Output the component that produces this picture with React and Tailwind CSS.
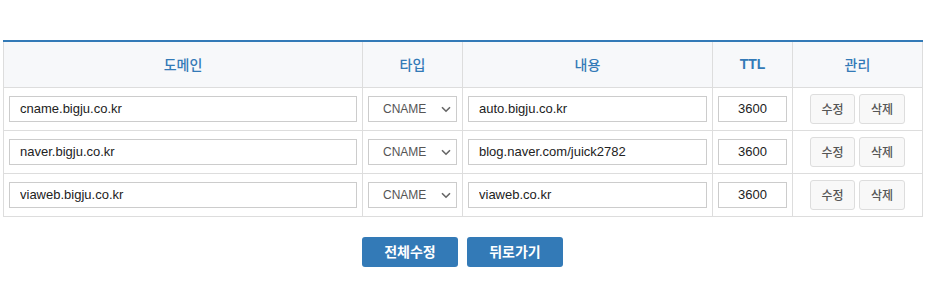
import React from "react";

const rows = [
  { domain: "cname.bigju.co.kr", content: "auto.bigju.co.kr", ttl: "3600" },
  { domain: "naver.bigju.co.kr", content: "blog.naver.com/juick2782", ttl: "3600" },
  { domain: "viaweb.bigju.co.kr", content: "viaweb.co.kr", ttl: "3600" },
];

const kr = { fontFamily: '"Noto Sans CJK KR", "Liberation Sans", sans-serif' };
const latin = { fontFamily: '"Liberation Sans", Arial, "Noto Sans CJK KR", sans-serif' };

export default function App() {
  return (
    <div className="w-[933px] h-[284px] bg-white pt-[40px]" style={latin}>
      <table className="ml-[3px] w-[919px] border-collapse table-fixed border-t-2 border-t-[#337ab7]">
        <colgroup>
          <col className="w-[359px]" />
          <col className="w-[100px]" />
          <col className="w-[250px]" />
          <col className="w-[80px]" />
          <col className="w-[130px]" />
        </colgroup>
        <thead>
          <tr className="bg-[#f7f8fa]">
            {["도메인", "타입", "내용"].map((h) => (
              <th key={h} className="h-[46px] border border-[#dddddd] border-t-0 text-[14px] font-medium text-[#337ab7] text-center align-middle p-0" style={kr}>
                {h}
              </th>
            ))}
            <th className="h-[46px] border border-[#dddddd] border-t-0 text-[14px] font-bold text-[#337ab7] text-center align-middle p-0" style={latin}>
              TTL
            </th>
            <th className="h-[46px] border border-[#dddddd] border-t-0 text-[14px] font-medium text-[#337ab7] text-center align-middle p-0" style={kr}>
              관리
            </th>
          </tr>
        </thead>
        <tbody>
          {rows.map((r, i) => (
            <tr key={i}>
              <td className="border border-[#dddddd] px-[5px] py-[6px] align-middle">
                <input
                  readOnly
                  value={r.domain}
                  className="block w-full h-[26px] border border-[#cccccc] px-[10px] text-[13px] text-[#222222] outline-none"
                  style={latin}
                />
              </td>
              <td className="border border-[#dddddd] px-[5px] py-[6px] align-middle">
                <div className="relative h-[26px] w-full border border-[#cccccc] flex items-center">
                  <span className="pl-[14px] text-[12px] text-[#555555]" style={latin}>CNAME</span>
                  <svg className="absolute right-[5px] top-[9px]" width="10" height="7" viewBox="0 0 10 7">
                    <path d="M1 1.2 L5 5.2 L9 1.2" fill="none" stroke="#666666" strokeWidth="1.6" />
                  </svg>
                </div>
              </td>
              <td className="border border-[#dddddd] px-[5px] py-[6px] align-middle">
                <input
                  readOnly
                  value={r.content}
                  className="block w-full h-[26px] border border-[#cccccc] px-[10px] text-[13px] text-[#222222] outline-none"
                  style={latin}
                />
              </td>
              <td className="border border-[#dddddd] px-[5px] py-[6px] align-middle">
                <input
                  readOnly
                  value={r.ttl}
                  className="block w-full h-[26px] border border-[#cccccc] text-center text-[13px] text-[#222222] outline-none"
                  style={latin}
                />
              </td>
              <td className="border border-[#dddddd] px-0 py-[6px] align-middle">
                <div className="flex justify-center gap-[4px]">
                  <button className="w-[45px] h-[30px] rounded-[3px] border border-[#dddddd] bg-[#f8f8f8] text-[12px] font-medium text-[#555555]" style={kr}>
                    수정
                  </button>
                  <button className="w-[46px] h-[30px] rounded-[3px] border border-[#dddddd] bg-[#f8f8f8] text-[12px] font-medium text-[#555555]" style={kr}>
                    삭제
                  </button>
                </div>
              </td>
            </tr>
          ))}
        </tbody>
      </table>
      <div className="ml-[3px] w-[919px] flex justify-center gap-[9px] mt-[20px]">
        <button className="w-[96px] h-[30px] rounded-[3px] bg-[#337ab7] text-white text-[14px] font-bold" style={kr}>
          전체수정
        </button>
        <button className="w-[96px] h-[30px] rounded-[3px] bg-[#337ab7] text-white text-[14px] font-bold" style={kr}>
          뒤로가기
        </button>
      </div>
    </div>
  );
}
